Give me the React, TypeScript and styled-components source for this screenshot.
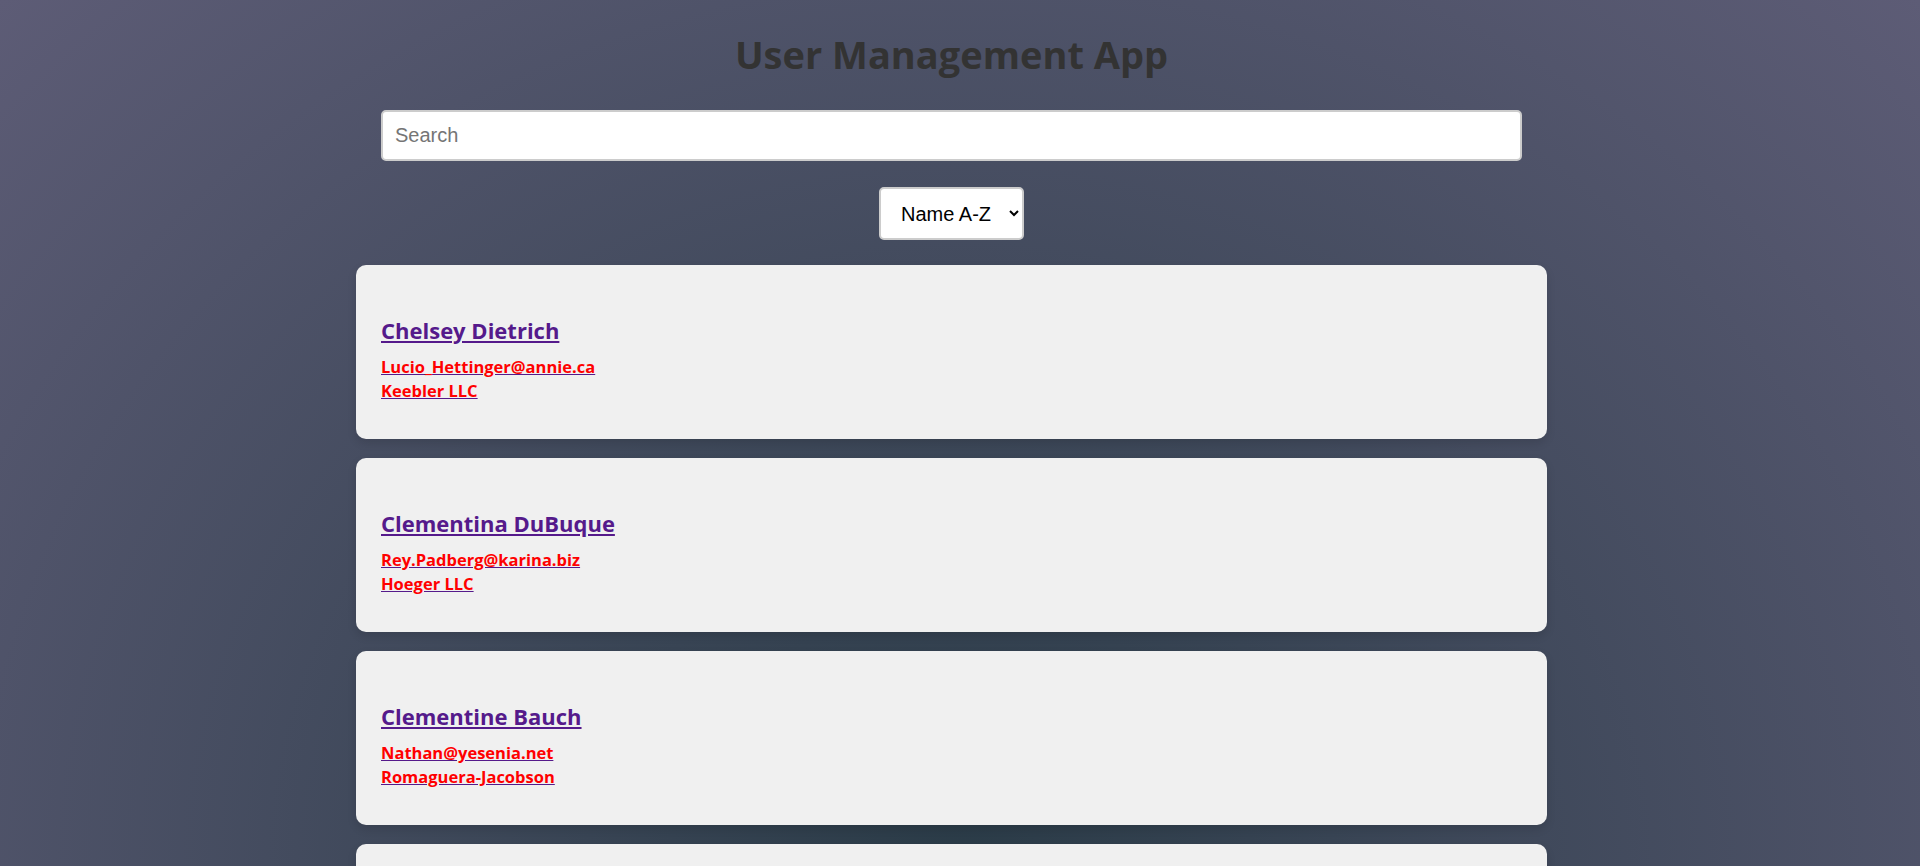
import React, { useMemo, useState } from "react";
import styled, { createGlobalStyle } from "styled-components";

type User = {
  id: number;
  name: string;
  email: string;
  company: string;
};

const users: User[] = [
  { id: 1, name: "Leanne Graham", email: "Sincere@april.biz", company: "Romaguera-Crona" },
  { id: 2, name: "Ervin Howell", email: "Shanna@melissa.tv", company: "Deckow-Crist" },
  { id: 3, name: "Clementine Bauch", email: "Nathan@yesenia.net", company: "Romaguera-Jacobson" },
  { id: 4, name: "Patricia Lebsack", email: "Julianne.OConner@kory.org", company: "Robel-Corkery" },
  { id: 5, name: "Chelsey Dietrich", email: "Lucio_Hettinger@annie.ca", company: "Keebler LLC" },
  { id: 6, name: "Mrs. Dennis Schulist", email: "Karley_Dach@jasper.info", company: "Considine-Lockman" },
  { id: 7, name: "Kurtis Weissnat", email: "Telly.Hoeger@billy.biz", company: "Johns Group" },
  { id: 8, name: "Nicholas Runolfsdottir V", email: "Sherwood@rosamond.me", company: "Abernathy Group" },
  { id: 9, name: "Glenna Reichert", email: "Chaim_McDermott@dana.io", company: "Yost and Sons" },
  { id: 10, name: "Clementina DuBuque", email: "Rey.Padberg@karina.biz", company: "Hoeger LLC" },
];

const GlobalStyle = createGlobalStyle`
  html, body {
    margin: 0;
    padding: 0;
  }

  body {
    font-family: "Open Sans", "Noto Sans", sans-serif;
    background: radial-gradient(ellipse at bottom, #2a3b47 0%, #5d5c76 100%) fixed;
  }
`;

// the reference was taken with a 17px scrollbar, so keep the same layout width
const Page = styled.div`
  min-height: 100vh;
  padding: 30px 17px 40px 0;
  box-sizing: border-box;
`;

const Container = styled.div`
  width: 1191px;
  margin: 0 auto;
  display: flex;
  flex-direction: column;
  align-items: center;
`;

const Title = styled.h1`
  margin: 0 0 32px;
  font-size: 38px;
  line-height: 48px;
  font-weight: 700;
  color: #333333;
  text-align: center;
`;

const SearchInput = styled.input`
  width: calc(100% - 50px);
  height: 51px;
  box-sizing: border-box;
  padding: 0 12px;
  border: 2px solid #cccccc;
  border-radius: 5px;
  background: #ffffff;
  font-family: "Liberation Sans", Arial, sans-serif;
  font-size: 20px;
  color: #222222;
  outline: none;

  &::placeholder {
    color: #757575;
  }
`;

const SortSelect = styled.select`
  margin: 26px 0 25px;
  width: 145px;
  height: 53px;
  box-sizing: border-box;
  padding: 0 8px 0 16px;
  border: 2px solid #cccccc;
  border-radius: 5px;
  background: #ffffff;
  font-family: "Liberation Sans", Arial, sans-serif;
  font-size: 20px;
  color: #000000;
`;

const CardList = styled.div`
  width: 100%;
  display: flex;
  flex-direction: column;
  gap: 19px;
`;

const Card = styled.div`
  background: #f0f0f0;
  border-radius: 10px;
  padding: 50px 25px 36px;
  box-shadow: 0 4px 10px rgba(0, 0, 0, 0.12);
`;

const CardLink = styled.a`
  display: inline-block;
  color: #551a8b;
  text-decoration: underline;
`;

const Name = styled.h2`
  margin: 0 0 10px;
  font-size: 22px;
  line-height: 30px;
  font-weight: 700;
`;

const Detail = styled.p`
  margin: 0;
  font-size: 16.5px;
  line-height: 24px;
  font-weight: 700;
  color: #ff0000;
`;

export default function App() {
  const [query, setQuery] = useState("");
  const [order, setOrder] = useState("asc");

  const list = useMemo(() => {
    const q = query.toLowerCase();
    return users
      .filter((u) => u.name.toLowerCase().includes(q))
      .sort((a, b) =>
        order === "asc" ? a.name.localeCompare(b.name) : b.name.localeCompare(a.name)
      );
  }, [query, order]);

  return (
    <Page>
      <GlobalStyle />
      <Container>
        <Title>User Management App</Title>
        <SearchInput
          placeholder="Search"
          value={query}
          onChange={(e) => setQuery(e.target.value)}
        />
        <SortSelect value={order} onChange={(e) => setOrder(e.target.value)}>
          <option value="asc">Name A-Z</option>
          <option value="desc">Name Z-A</option>
        </SortSelect>
        <CardList>
          {list.map((u) => (
            <Card key={u.id}>
              <CardLink href={`#user-${u.id}`}>
                <Name>{u.name}</Name>
                <Detail>{u.email}</Detail>
                <Detail>{u.company}</Detail>
              </CardLink>
            </Card>
          ))}
        </CardList>
      </Container>
    </Page>
  );
}
